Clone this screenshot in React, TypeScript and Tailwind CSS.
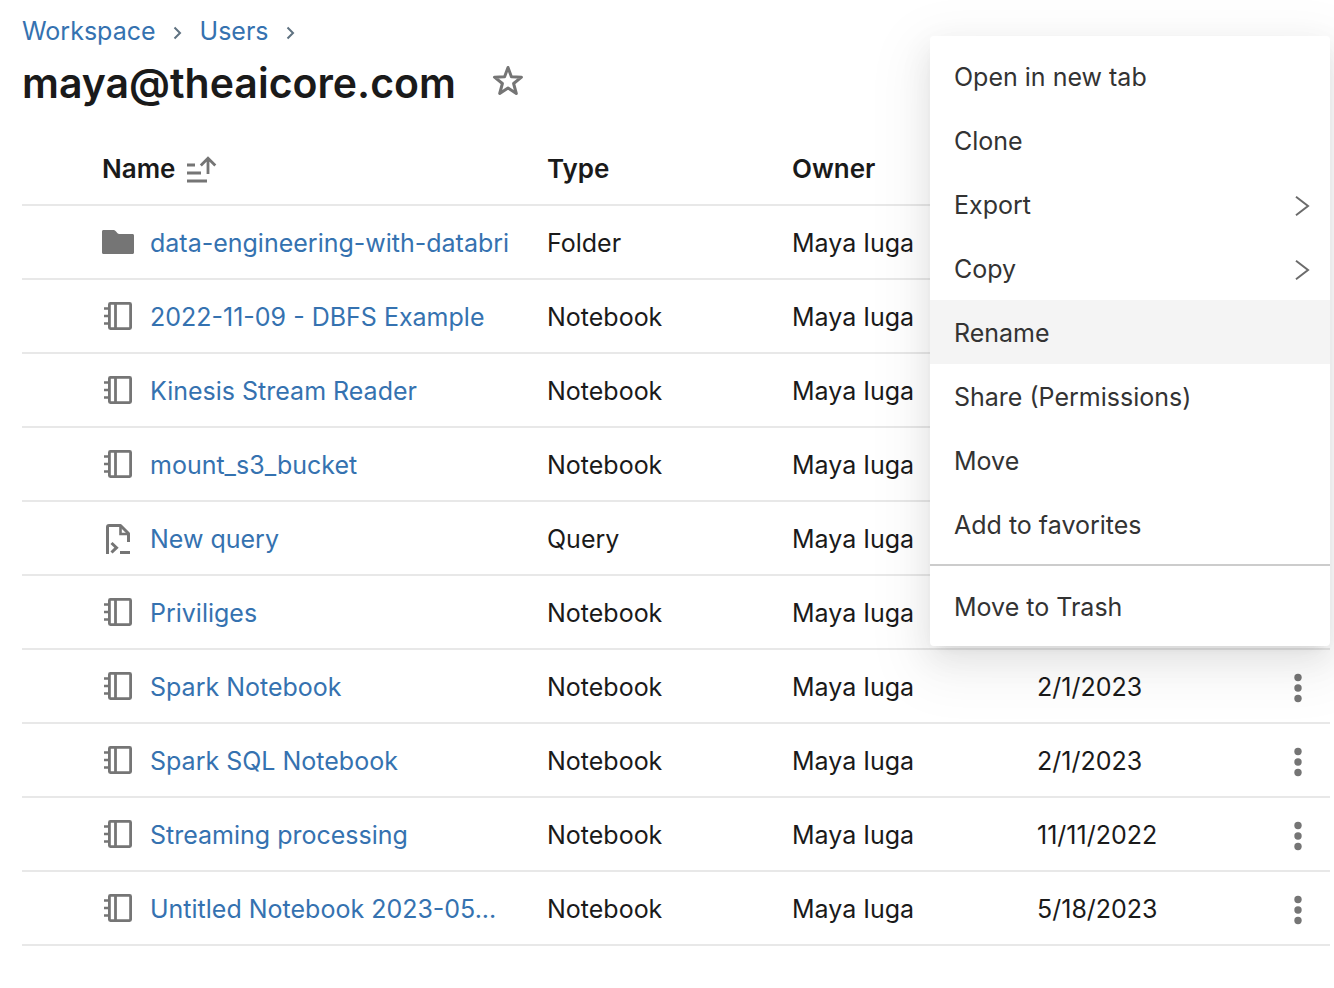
import React from "react";

type Kind = "Folder" | "Notebook" | "Query";

interface Item {
  name: string;
  kind: Kind;
  date?: string;
}

const items: Item[] = [
  { name: "data-engineering-with-databri", kind: "Folder" },
  { name: "2022-11-09 - DBFS Example", kind: "Notebook" },
  { name: "Kinesis Stream Reader", kind: "Notebook" },
  { name: "mount_s3_bucket", kind: "Notebook" },
  { name: "New query", kind: "Query" },
  { name: "Priviliges", kind: "Notebook" },
  { name: "Spark Notebook", kind: "Notebook", date: "2/1/2023" },
  { name: "Spark SQL Notebook", kind: "Notebook", date: "2/1/2023" },
  { name: "Streaming processing", kind: "Notebook", date: "11/11/2022" },
  { name: "Untitled Notebook 2023-05...", kind: "Notebook", date: "5/18/2023" },
];

const menuItems = [
  { label: "Open in new tab" },
  { label: "Clone" },
  { label: "Export", submenu: true },
  { label: "Copy", submenu: true },
  { label: "Rename", active: true },
  { label: "Share (Permissions)" },
  { label: "Move" },
  { label: "Add to favorites" },
];

function KindIcon({ kind }: { kind: Kind }) {
  if (kind === "Folder") {
    return (
      <svg aria-hidden="true" className="size-8 shrink-0" viewBox="0 0 32 32" fill="#757575">
        <path d="M1.5 4H11c1.2 0 2 .5 2.800 1.300L15.500 7.200c.5.6 1 .8 1.800.8H30.500c.9 0 1.500.6 1.500 1.500V26.500c0 .9-.6 1.500-1.500 1.500H1.500C.6 28 0 27.400 0 26.500V5.500C0 4.600.6 4 1.500 4Z" />
      </svg>
    );
  }
  if (kind === "Query") {
    return (
      <svg aria-hidden="true" className="size-8 shrink-0" viewBox="0 0 32 32" fill="none" stroke="#757575" strokeWidth="3">
        <path d="M5.500 32V5q0-1.500 1.500-1.500H18.500L26.500 11.500V20" strokeLinejoin="round" />
        <path d="M18.500 3.500V12H27" strokeWidth="2.600" />
        <path d="M9.500 21l5 4.700-5 4.800" />
        <path d="M18 30.500H28" />
      </svg>
    );
  }
  return (
    <svg aria-hidden="true" className="size-8 shrink-0" viewBox="0 0 32 32" fill="none" stroke="#757575" strokeWidth="2.800">
      <rect x="7.400" y="3.400" width="21.200" height="25.200" rx="1" />
      <path d="M13.500 3V29" />
      <path d="M2 8.500H8M2 16H8M2 23.500H8" strokeWidth="2.600" />
    </svg>
  );
}

function Crumb({ label }: { label: string }) {
  return (
    <li className="flex items-center">
      <a href="#" className="text-[#3572b0]">
        {label}
      </a>
      <svg aria-hidden="true" className="mx-4 mt-1 h-4 w-3" viewBox="0 0 12 16" fill="none" stroke="#5f7281" strokeWidth="2">
        <path d="M2.500 2.500L8 8 2.500 13.500" />
      </svg>
    </li>
  );
}

function ContextMenu() {
  return (
    <div
      role="menu"
      className="absolute top-9 right-1 w-[400px] rounded-[4px] bg-white py-2 text-[#333333] shadow-[0_6px_12px_-8px_rgba(0,0,0,0.12),0_12px_32px_rgba(0,0,0,0.08),0_18px_56px_16px_rgba(0,0,0,0.05)]"
    >
      {menuItems.map((m) => (
        <button
          key={m.label}
          type="button"
          role="menuitem"
          className={`flex h-16 w-full items-center justify-between pt-0.5 pr-5 pl-6 text-left ${m.active ? "bg-[#f4f4f4]" : ""}`}
        >
          {m.label}
          {m.submenu && (
            <svg aria-hidden="true" className="mt-0.5 h-5 w-4" viewBox="0 0 16 20" fill="none" stroke="#6b6b6b" strokeWidth="2">
              <path d="M2 0.800L14 10 2 19.200" />
            </svg>
          )}
        </button>
      ))}
      <hr className="my-2 border-t-2 border-[#cccccc]" />
      <button type="button" role="menuitem" className="flex h-16 w-full items-center px-6 pt-0.5 text-left">
        Move to Trash
      </button>
    </div>
  );
}

export default function App() {
  return (
    <main className="relative min-h-screen overflow-hidden bg-white pt-[13px] pr-1 pb-10 pl-[22px] font-['Inter','Liberation_Sans',sans-serif] text-[25px] leading-9 text-[#1a1a1a]">
      <nav aria-label="Breadcrumb">
        <ol className="flex">
          <Crumb label="Workspace" />
          <Crumb label="Users" />
        </ol>
      </nav>
      <div className="mt-2 flex items-center gap-[34px]">
        <h1 className="text-[41px] leading-[52px] font-semibold">maya@theaicore.com</h1>
        <button type="button" aria-label="Add to favorites" className="-mt-1">
          <svg className="size-9" viewBox="0 0 36 36" fill="none" stroke="#757575" strokeWidth="3" strokeLinejoin="round">
            <path d="M18 4.500L21.400 13.700 31.500 14.200 23.600 20.500 26.300 30.500 18 25 9.700 30.500 12.400 20.500 4.500 14.200 14.600 13.700Z" />
          </svg>
        </button>
      </div>
      <table className="mt-[22px] w-full table-fixed border-collapse text-left">
        <colgroup>
          <col />
          <col className="w-[245px]" />
          <col className="w-[245px]" />
          <col className="w-[245px]" />
          <col className="w-16" />
        </colgroup>
        <thead className="text-[26px]">
          <tr className="h-[74px] border-b-2 border-[#e8e8e8]">
            <th className="pt-0.5 pr-4 pl-20 font-semibold">
              <button type="button" className="flex items-center gap-3">
                Name
                <svg aria-hidden="true" className="h-7 w-[30px]" viewBox="0 0 30 28" fill="none" stroke="#757575" strokeWidth="2.800">
                  <path d="M0 10H8M0 18H14M0 26H20" />
                  <path d="M21 19V3.500M13.800 10.500L21 3.200 28.300 10.500" />
                </svg>
              </button>
            </th>
            <th className="px-4 pt-0.5 font-semibold">Type</th>
            <th className="px-4 pt-0.5 font-semibold">Owner</th>
            <th aria-label="Date" />
            <th aria-label="Actions" />
          </tr>
        </thead>
        <tbody>
          {items.map((item) => (
            <tr key={item.name} className="h-[74px] border-b-2 border-[#e8e8e8]">
              <td className="pr-4 pl-20">
                <div className="flex items-center gap-4">
                  <KindIcon kind={item.kind} />
                  <a href="#" className="min-w-0 flex-1 overflow-hidden pt-0.5 whitespace-nowrap text-[#3572b0]">
                    {item.name}
                  </a>
                </div>
              </td>
              <td className="px-4 pt-0.5">{item.kind}</td>
              <td className="px-4 pt-0.5">Maya Iuga</td>
              <td className="px-4 pt-0.5">{item.date}</td>
              <td className="pt-0.5">
                <button type="button" aria-label={`Actions for ${item.name}`} className="mx-auto flex size-8 items-center justify-center">
                  <svg className="size-8" viewBox="0 0 32 32" fill="#757575">
                    <circle cx="16" cy="6.500" r="3.700" />
                    <circle cx="16" cy="17" r="3.700" />
                    <circle cx="16" cy="27.500" r="3.700" />
                  </svg>
                </button>
              </td>
            </tr>
          ))}
        </tbody>
      </table>
      <ContextMenu />
    </main>
  );
}
